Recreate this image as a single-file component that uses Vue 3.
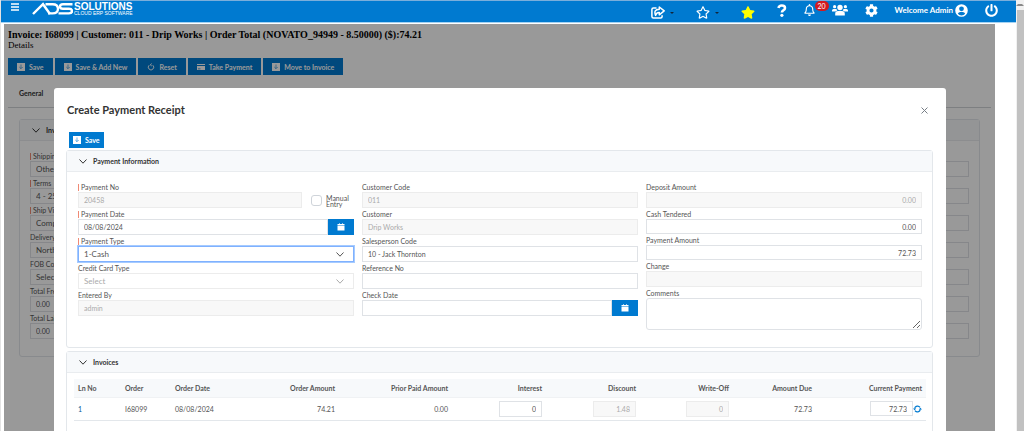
<script setup>
    import { ref } from 'vue';

    // toolbar of the invoice page
    const toolbar = [
        { text: 'Save', icon: 'save' },
        { text: 'Save & Add New', icon: 'save' },
        { text: 'Reset', icon: 'reset' },
        { text: 'Take Payment', icon: 'card' },
        { text: 'Move to Invoice', icon: 'save' },
    ]

    // invoice fields behind the dialog
    const invoiceFields = [
        { id: 'shipping', label: 'Shipping', value: 'Other', select: true, required: true },
        { id: 'terms', label: 'Terms', value: '4 - 25', select: true, required: true },
        { id: 'shipVia', label: 'Ship Via', value: 'Company', select: true, required: true },
        { id: 'delivery', label: 'Delivery', value: 'North', select: true },
        { id: 'fob', label: 'FOB Code', value: 'Select', select: true },
        { id: 'freight', label: 'Total Freight', value: '0.00' },
        { id: 'labor', label: 'Total Labor', value: '0.00' },
    ]

    const manualEntry = ref(false)
    const paymentDate = ref('08/08/2024')
    const paymentType = ref('1-Cash')
    const salesperson = ref('10 - Jack Thornton')
    const referenceNo = ref('')
    const checkDate = ref('')
    const cashTendered = ref('0.00')
    const paymentAmount = ref('72.73')
    const comments = ref('')

    // width is shared out over the table in proportion
    const columns = [
        { text: 'Ln No', width: 47 },
        { text: 'Order', width: 50 },
        { text: 'Order Date', width: 84 },
        { text: 'Order Amount', width: 84, num: true },
        { text: 'Prior Paid Amount', width: 113, num: true },
        { text: 'Interest', width: 94, num: true },
        { text: 'Discount', width: 94, num: true },
        { text: 'Write-Off', width: 93, num: true },
        { text: 'Amount Due', width: 83, num: true },
        { text: 'Current Payment', width: 110, num: true },
    ]

    const invoices = ref([
        { line: 1, order: 'I68099', date: '08/08/2024', amount: '74.21', prior: '0.00', interest: '0', discount: '1.48', writeOff: '0', due: '72.73', current: '72.73' },
    ])
</script>

<template>
    <div class="app">
        <div class="main">
            <!-- top bar -->
            <header class="topbar">
                <button class="iconBtn menu" aria-label="Menu">
                    <svg width="8" height="8" viewBox="0 0 8 8"><path d="M0 1h8M0 4h8M0 7h8" stroke="#fff" stroke-width="1.4" /></svg>
                </button>
                <a href="#" class="logo">
                    <svg width="41" height="13" viewBox="0 0 41 13" fill="none" stroke="#fff" stroke-width="2.4">
                        <path d="M1 12L11 2.200 18 12" />
                        <path d="M13.500 2.200h7q5.500 0 5.500 4.600t-5.500 4.600h-4.500" />
                        <path d="M40.500 2.200h-9.500q-3 0-3 2.300t3 2.300h6q3 0 3 2.300t-3 2.300h-10.500" />
                    </svg>
                    <span class="logoText">
                        <span class="logoName">SOLUTIONS</span>
                        <span class="logoSub">CLOUD ERP SOFTWARE</span>
                    </span>
                </a>

                <nav class="links">
                    <button class="iconBtn" aria-label="Share">
                        <svg width="14" height="13" viewBox="0 0 14 13" fill="none" stroke="#fff" stroke-width="1.500">
                            <path d="M5.500 1.900H2.400Q.9 1.900.9 3.400v7.200q0 1.500 1.500 1.500h7.200q1.500 0 1.500-1.500V9.300" />
                            <path d="M8.300 1l4.900 3.900-4.900 3.900V6.500Q5.500 6.400 4.600 9.400 2.200 3.600 8.300 3.300z" stroke-linejoin="round" />
                        </svg>
                        <span class="caret"></span>
                    </button>
                    <button class="iconBtn" aria-label="Favorites">
                        <svg width="14" height="13" viewBox="0 0 576 512"><path fill="#fff" d="M528.1 171.5L382 150.2 316.7 17.8c-11.7-23.6-45.6-23.9-57.4 0L194 150.2 47.9 171.5c-26.2 3.8-36.7 36.1-17.7 54.6l105.7 103-25 145.5c-4.5 26.3 23.2 46 46.4 33.7L288 439.6l130.7 68.7c23.2 12.2 50.9-7.4 46.4-33.7l-25-145.5 105.7-103c19-18.5 8.5-50.8-17.7-54.6zM388.600 312.300l23.700 138.400L288 385.400l-124.300 65.300 23.700-138.400-100.600-98 139-20.200 62.200-126 62.200 126 139 20.200-100.600 98z" /></svg>
                        <span class="caret"></span>
                    </button>
                    <button class="iconBtn" aria-label="Add to favorites">
                        <svg width="14" height="13" viewBox="0 0 576 512"><path fill="#ff0" d="M259.300 17.800L194 150.200 47.900 171.500c-26.200 3.800-36.700 36.100-17.700 54.600l105.700 103-25 145.500c-4.500 26.300 23.200 46 46.400 33.700L288 439.600l130.700 68.700c23.200 12.200 50.900-7.400 46.400-33.700l-25-145.500 105.700-103c19-18.500 8.500-50.800-17.700-54.600L382 150.200 316.700 17.800c-11.700-23.600-45.600-23.900-57.400 0z" /></svg>
                    </button>
                </nav>
                <nav class="links user">
                    <button class="iconBtn" aria-label="Help">
                        <svg width="10" height="13" viewBox="0 0 10 13"><path d="M1.500 4Q2 1.500 4.800 1.500q3.200 0 3.200 2.400 0 1.500-1.700 2.400-1.400.8-1.400 2.300" fill="none" stroke="#fff" stroke-width="2.600" /><circle cx="4.900" cy="11.300" r="1.600" fill="#fff" /></svg>
                    </button>
                    <button class="iconBtn bell" aria-label="Notifications">
                        <svg width="11" height="12" viewBox="0 0 448 512"><path fill="#fff" d="M439.390 362.290c-19.320-20.760-55.470-51.990-55.470-154.290 0-77.700-54.480-139.900-127.940-155.160V32c0-17.670-14.320-32-31.980-32s-31.980 14.330-31.980 32v20.840C118.560 68.100 64.080 130.300 64.080 208c0 102.300-36.150 133.530-55.470 154.290-6 6.450-8.660 14.160-8.610 21.710.11 16.400 12.980 32 32.100 32h383.800c19.120 0 32-15.600 32.100-32 .05-7.550-2.610-15.270-8.610-21.710zM67.530 368c21.220-27.970 44.420-74.330 44.530-159.420 0-.2-.06-.38-.06-.58 0-61.860 50.140-112 112-112s112 50.140 112 112c0 .2-.06.38-.06.58.11 85.100 23.310 131.460 44.530 159.420H67.530zM224 512c35.320 0 63.970-28.650 63.970-64H160.030c0 35.350 28.650 64 63.970 64z" /></svg>
                        <span class="badge">20</span>
                    </button>
                    <button class="iconBtn" aria-label="Users">
                        <svg width="16" height="12" viewBox="0 0 16 12" fill="#fff">
                            <circle cx="8" cy="3.500" r="2.700" /><circle cx="2.600" cy="2.700" r="1.600" /><circle cx="13.400" cy="2.700" r="1.600" />
                            <path d="M3.200 11.500V9.800Q3.200 7 6 7h4q2.800 0 2.800 2.800v1.700zM0 7.500V6.400Q0 4.900 1.500 4.900h2.200q.6 0 1 .4.200.8.700 1.200-1.400.3-2 1zM16 7.500V6.400q0-1.500-1.500-1.500h-2.200q-.6 0-1 .4-.2.8-.7 1.200 1.400.3 2 1z" />
                        </svg>
                    </button>
                    <button class="iconBtn" aria-label="Settings">
                        <svg width="13" height="13" viewBox="0 0 512 512"><path fill="#fff" d="M487.400 315.700l-42.600-24.600c4.300-23.200 4.300-47 0-70.200l42.600-24.600c4.900-2.800 7.100-8.600 5.500-14-11.100-35.600-30-67.800-54.700-94.600-3.800-4.100-10-5.100-14.800-2.300L380.800 110c-17.900-15.400-38.500-27.300-60.800-35.100V25.800c0-5.600-3.900-10.500-9.400-11.700-36.700-8.200-74.300-7.800-109.200 0-5.500 1.200-9.400 6.100-9.400 11.700V75c-22.200 7.900-42.800 19.800-60.800 35.100L88.700 85.500c-4.900-2.800-11-1.900-14.800 2.300-24.700 26.700-43.600 58.900-54.700 94.600-1.700 5.400.6 11.200 5.500 14L67.300 221c-4.300 23.200-4.300 47 0 70.200l-42.600 24.600c-4.900 2.800-7.100 8.600-5.500 14 11.100 35.600 30 67.800 54.700 94.600 3.800 4.100 10 5.100 14.800 2.300l42.600-24.600c17.900 15.400 38.500 27.300 60.800 35.100v49.200c0 5.600 3.900 10.500 9.400 11.700 36.700 8.200 74.300 7.800 109.200 0 5.500-1.200 9.400-6.100 9.400-11.700v-49.200c22.200-7.900 42.800-19.800 60.800-35.100l42.600 24.600c4.900 2.800 11 1.900 14.800-2.300 24.700-26.700 43.600-58.900 54.700-94.600 1.500-5.500-.7-11.300-5.600-14.100zM256 336c-44.100 0-80-35.900-80-80s35.900-80 80-80 80 35.900 80 80-35.900 80-80 80z" /></svg>
                    </button>
                    <button class="iconBtn welcome">
                        <span>Welcome Admin</span>
                        <svg width="13" height="13" viewBox="0 0 13 13"><path fill="#fff" fill-rule="evenodd" d="M6.500.2a6.300 6.300 0 1 0 0 12.600 6.300 6.300 0 0 0 0-12.600zM6.500 2.400a2.400 2.400 0 1 1 0 4.800 2.400 2.400 0 0 1 0-4.800zM2.800 9.700Q3.600 8 5.200 8h2.600q1.600 0 2.400 1.700Q8.800 11.400 6.500 11.400T2.800 9.700z" /></svg>
                    </button>
                    <button class="iconBtn" aria-label="Log out">
                        <svg width="13" height="13" viewBox="0 0 512 512"><path fill="#fff" d="M400 54.100c63 45 104 118.600 104 201.900 0 136.800-110.800 247.700-247.500 248C120 504.300 8.200 393 8 256.400 7.900 173.100 48.900 99.300 111.800 54.200c11.700-8.300 28-4.800 35 7.700L162.600 90c5.900 10.500 3.100 23.800-6.600 31-41.500 30.800-68 79.600-68 134.900-.1 92.300 74.500 168.100 168 168.100 91.600 0 168.600-74.200 168-169.100-.3-51.800-24.700-101.800-68.100-134-9.700-7.200-12.400-20.500-6.500-30.900l15.800-28.100c7-12.400 23.200-16.100 34.800-7.800zM296 264V24c0-13.300-10.700-24-24-24h-32c-13.300 0-24 10.700-24 24v240c0 13.300 10.700 24 24 24h32c13.300 0 24-10.700 24-24z" /></svg>
                    </button>
                </nav>
            </header>

            <!-- invoice page -->
            <div class="page">
                <h1 class="pageTitle">Invoice: I68099 | Customer: 011 - Drip Works | Order Total (NOVATO_94949 - 8.50000) ($):74.21</h1>
                <div class="pageSub">Details</div>
                <div class="toolbar">
                    <button v-for="item in toolbar" :key="item.text" class="btn">
                        <svg v-if="item.icon === 'save'" width="8" height="8" viewBox="0 0 8 8"><path fill="#fff" d="M0 0h8v8H0z" /><path d="M4 1.500v4M2.300 4L4 5.700 5.700 4" fill="none" stroke="#007ad0" stroke-width=".6" /></svg>
                        <svg v-else-if="item.icon === 'reset'" width="8" height="8" viewBox="0 0 8 8"><path d="M2.200 2.200A2.700 2.700 0 1 0 5.800 2.200M4.800.6L3.200 1.800l1.600 1.200" fill="none" stroke="#fff" stroke-width=".9" /></svg>
                        <svg v-else width="8" height="8" viewBox="0 0 8 8"><path fill="#fff" fill-rule="evenodd" d="M0 1h8v1H0zM0 3h8v4H0zM1 5.500v.7h2.500v-.7z" /></svg>
                        {{ item.text }}
                    </button>
                </div>
                <div class="tabs">
                    <a href="#" class="tab">General</a>
                    <a href="#" class="tab active">Details</a>
                </div>

                <section class="card">
                    <h2 class="cardHead">
                        <svg width="8" height="5" viewBox="0 0 8 5"><path d="M.5.5L4 4.200 7.500.5" fill="none" stroke="#333" /></svg>
                        Invoice
                    </h2>
                    <div class="pageForm">
                        <div v-for="field in invoiceFields" :key="field.id" class="field">
                            <label :for="field.id" :class="{ required: field.required }">{{ field.label }}</label>
                            <select v-if="field.select" :id="field.id" class="input big">
                                <option>{{ field.value }}</option>
                            </select>
                            <input v-else :id="field.id" class="input" :value="field.value">
                        </div>
                    </div>
                </section>

                <!-- dialog -->
                <div class="mask">
                    <div class="dialog" role="dialog" aria-labelledby="dialogTitle">
                        <div class="dialogHead">
                            <h2 id="dialogTitle">Create Payment Receipt</h2>
                            <button class="close" aria-label="Close">
                                <svg width="7" height="7" viewBox="0 0 7 7"><path d="M.5.5l6 6M6.500.5l-6 6" stroke="#777e86" stroke-width="1" /></svg>
                            </button>
                        </div>
                        <button class="btn dialogSave">
                            <svg width="8" height="8" viewBox="0 0 8 8"><path fill="#fff" d="M0 0h8v8H0z" /><path d="M4 1.500v4M2.300 4L4 5.700 5.700 4" fill="none" stroke="#007ad0" stroke-width=".6" /></svg>
                            Save
                        </button>

                        <section class="card payment">
                            <h3 class="cardHead">
                                <svg width="8" height="5" viewBox="0 0 8 5"><path d="M.5.5L4 4.200 7.500.5" fill="none" stroke="#333" /></svg>
                                Payment Information
                            </h3>
                            <div class="form">
                                <div class="col">
                                    <div class="split">
                                        <div class="field">
                                            <label for="paymentNo" class="required">Payment No</label>
                                            <input id="paymentNo" class="input" value="20458" disabled>
                                        </div>
                                        <div class="check">
                                            <input type="checkbox" id="manualEntry" v-model="manualEntry">
                                            <label for="manualEntry">Manual Entry</label>
                                        </div>
                                    </div>
                                    <div class="field">
                                        <label for="paymentDate" class="required">Payment Date</label>
                                        <div class="dateBox">
                                            <input id="paymentDate" class="input" v-model="paymentDate">
                                            <button class="dateBtn" aria-label="Pick payment date">
                                                <svg width="8" height="8" viewBox="0 0 8 8"><path fill="#fff" d="M.5 1H2V.3h.8V1h2.400V.3H6V1h1.500v1H.5zM.5 2.600h7v5h-7z" /></svg>
                                            </button>
                                        </div>
                                    </div>
                                    <div class="field">
                                        <label for="paymentType" class="required">Payment Type</label>
                                        <div class="selectBox">
                                            <select id="paymentType" class="input big focused" v-model="paymentType">
                                                <option>1-Cash</option>
                                            </select>
                                            <svg width="8" height="5" viewBox="0 0 8 5"><path d="M.5.5L4 4.200 7.500.5" fill="none" stroke="#555" /></svg>
                                        </div>
                                    </div>
                                    <div class="field">
                                        <label for="cardType">Credit Card Type</label>
                                        <div class="selectBox">
                                            <select id="cardType" class="input big empty" disabled>
                                                <option>Select</option>
                                            </select>
                                            <svg width="8" height="5" viewBox="0 0 8 5"><path d="M.5.5L4 4.200 7.500.5" fill="none" stroke="#aaa" /></svg>
                                        </div>
                                    </div>
                                    <div class="field">
                                        <label for="enteredBy">Entered By</label>
                                        <input id="enteredBy" class="input" value="admin" disabled>
                                    </div>
                                </div>

                                <div class="col">
                                    <div class="field">
                                        <label for="customerCode">Customer Code</label>
                                        <input id="customerCode" class="input" value="011" disabled>
                                    </div>
                                    <div class="field">
                                        <label for="customer">Customer</label>
                                        <input id="customer" class="input" value="Drip Works" disabled>
                                    </div>
                                    <div class="field">
                                        <label for="salesperson">Salesperson Code</label>
                                        <input id="salesperson" class="input" v-model="salesperson">
                                    </div>
                                    <div class="field">
                                        <label for="referenceNo">Reference No</label>
                                        <input id="referenceNo" class="input" v-model="referenceNo">
                                    </div>
                                    <div class="field">
                                        <label for="checkDate">Check Date</label>
                                        <div class="dateBox">
                                            <input id="checkDate" class="input" v-model="checkDate">
                                            <button class="dateBtn" aria-label="Pick check date">
                                                <svg width="8" height="8" viewBox="0 0 8 8"><path fill="#fff" d="M.5 1H2V.3h.8V1h2.400V.3H6V1h1.500v1H.5zM.5 2.600h7v5h-7z" /></svg>
                                            </button>
                                        </div>
                                    </div>
                                </div>

                                <div class="col">
                                    <div class="field">
                                        <label for="deposit">Deposit Amount</label>
                                        <input id="deposit" class="input num" value="0.00" disabled>
                                    </div>
                                    <div class="field">
                                        <label for="cash">Cash Tendered</label>
                                        <input id="cash" class="input num short" v-model="cashTendered">
                                    </div>
                                    <div class="field">
                                        <label for="payAmount">Payment Amount</label>
                                        <input id="payAmount" class="input num short" v-model="paymentAmount">
                                    </div>
                                    <div class="field">
                                        <label for="change">Change</label>
                                        <input id="change" class="input num" disabled>
                                    </div>
                                    <div class="field">
                                        <label for="comments">Comments</label>
                                        <textarea id="comments" class="input area" v-model="comments"></textarea>
                                    </div>
                                </div>
                            </div>
                        </section>

                        <section class="card">
                            <h3 class="cardHead">
                                <svg width="8" height="5" viewBox="0 0 8 5"><path d="M.5.5L4 4.200 7.500.5" fill="none" stroke="#333" /></svg>
                                Invoices
                            </h3>
                            <div class="tableWrap">
                                <table>
                                    <colgroup>
                                        <col v-for="col in columns" :key="col.text" :style="{ width: col.width + 'px' }">
                                    </colgroup>
                                    <thead>
                                        <tr>
                                            <th v-for="col in columns" :key="col.text" :class="{ num: col.num }">{{ col.text }}</th>
                                        </tr>
                                    </thead>
                                    <tbody>
                                        <tr v-for="row in invoices" :key="row.line">
                                            <td><a href="#">{{ row.line }}</a></td>
                                            <td>{{ row.order }}</td>
                                            <td>{{ row.date }}</td>
                                            <td class="num">{{ row.amount }}</td>
                                            <td class="num">{{ row.prior }}</td>
                                            <td class="num"><input class="input cell num" v-model="row.interest" aria-label="Interest"></td>
                                            <td class="num"><input class="input cell num" v-model="row.discount" aria-label="Discount" disabled></td>
                                            <td class="num"><input class="input cell num" v-model="row.writeOff" aria-label="Write-Off" disabled></td>
                                            <td class="num">{{ row.due }}</td>
                                            <td>
                                                <div class="current">
                                                    <input class="input cell num short" v-model="row.current" aria-label="Current Payment">
                                                    <button class="refresh" aria-label="Refresh">
                                                        <svg width="9" height="8" viewBox="0 0 9 8"><path d="M1.700 3.600A2.900 2.900 0 0 1 7 2.400M7.300 4.400A2.900 2.900 0 0 1 2 5.600" fill="none" stroke="#007ad0" stroke-width="1.200" /><path d="M0 3.400h3.200L1.600 5.300zM9 4.600H5.800L7.400 2.700z" fill="#007ad0" /></svg>
                                                    </button>
                                                </div>
                                            </td>
                                        </tr>
                                    </tbody>
                                </table>
                            </div>
                        </section>
                    </div>
                </div>
            </div>
        </div>

        <!-- scroll bar -->
        <div class="scroll">
            <span class="scrollUp"></span>
            <div class="scrollThumb"></div>
        </div>
    </div>
</template>

<style>
    body {
        background-color: #ffffff;
    }
</style>

<style scoped>
    .app {
        display: flex;
        height: 100vh;
        overflow: hidden;
        box-sizing: border-box;
        border-left: 1px solid #e3e3e3;
        font-family: Lato, "Noto Sans", sans-serif;
        font-size: 7px;
        line-height: 10px;
        color: #555555;
    }

    .app * {
        box-sizing: border-box;
    }

    button, input, select, textarea {
        font-family: inherit;
        font-size: inherit;
        line-height: inherit;
        color: inherit;
        margin: 0;
    }

    button {
        padding: 0;
        border: none;
        background: none;
        cursor: pointer;
    }

    svg {
        display: block;
        flex: none;
    }

    .main {
        flex: 1;
        min-width: 0;
        display: flex;
        flex-direction: column;
    }

    .topbar {
        display: flex;
        align-items: flex-start;
        height: 23px;
        padding: 0 18px 0 10px;
        background-color: #007ad0;
        border-top: 1px solid #7aaedb;
        border-bottom: 1px solid #a5d3f3;
    }

    .menu {
        height: 12px;
    }

    .logo {
        display: flex;
        gap: 1px;
        margin: 1px auto 0 13px;
        color: #ffffff;
        text-decoration: none;
        font-family: "Liberation Sans", Arial, sans-serif;
    }

    .logoText {
        display: flex;
        flex-direction: column;
        padding-top: 1px;
    }

    .logoName {
        font-size: 10px;
        line-height: 8px;
        font-weight: bold;
    }

    .logoSub {
        font-size: 5px;
        line-height: 4px;
    }

    .links {
        display: flex;
        align-items: center;
        gap: 22px;
        height: 22px;
        color: #ffffff;
    }

    .user {
        gap: 17px;
        height: 18px;
        margin-left: 22px;
    }

    .iconBtn {
        display: flex;
        align-items: center;
        position: relative;
        color: #ffffff;
    }

    .caret {
        margin: 2px 0 0 5px;
        border: 2px solid transparent;
        border-top-color: #12263a;
        border-bottom: none;
    }

    .badge {
        position: absolute;
        left: 11px;
        top: -3px;
        width: 14px;
        height: 10px;
        border-radius: 5px;
        background-color: #d31a1f;
        font-size: 7px;
        text-align: center;
    }

    .welcome {
        gap: 2px;
        font-size: 8px;
        font-weight: bold;
    }

    .page {
        flex: 1;
        position: relative;
        margin: 1px 21px 0 3px;
        padding: 5px 4px 0;
        min-height: 0;
    }

    .pageTitle {
        margin: 0;
        font-family: "Liberation Serif", "Times New Roman", serif;
        font-size: 10px;
        line-height: 11px;
        color: #000000;
    }

    .pageSub {
        font-family: "Liberation Serif", "Times New Roman", serif;
        font-size: 9px;
        line-height: 10px;
        color: #000000;
    }

    .toolbar {
        display: flex;
        gap: 2px;
        margin-top: 8px;
    }

    .btn {
        display: flex;
        align-items: center;
        gap: 4px;
        height: 17px;
        padding: 0 9px;
        background-color: #007ad0;
        color: #ffffff;
        font-size: 7px;
        font-weight: bold;
        white-space: nowrap;
    }

    .tabs {
        display: flex;
        margin-top: 7px;
        border-bottom: 1px solid #d0d4d8;
    }

    .tab {
        padding: 6px 11px 9px;
        font-weight: bold;
        color: #333333;
        text-decoration: none;
    }

    .tab.active {
        box-shadow: 0 1px #007ad0;
    }

    .card {
        margin-bottom: 3px;
        border: 1px solid #e3e7eb;
        border-radius: 3px;
        background-color: #ffffff;
    }

    .page > .card {
        margin: 11px 11px 0;
    }

    .cardHead {
        display: flex;
        align-items: center;
        gap: 6px;
        height: 21px;
        margin: 0;
        padding: 0 12px;
        background-color: #f7f9fb;
        border-bottom: 1px solid #e9ecef;
        font-size: 7px;
        font-weight: bold;
        color: #333333;
    }

    .pageForm {
        padding: 10px 10px 16px;
    }

    .field {
        display: flex;
        flex-direction: column;
        margin-bottom: 1px;
    }

    .field label {
        white-space: nowrap;
    }

    .required::before {
        content: "";
        display: inline-block;
        width: 1px;
        height: 7px;
        margin-right: 2px;
        vertical-align: -1px;
        background-color: #f08a75;
    }

    .input {
        width: 100%;
        height: 16px;
        padding: 0 5px;
        border: 1px solid #dfe2e6;
        border-radius: 0;
        background-color: #ffffff;
        appearance: none;
        outline: none;
    }

    .input:disabled {
        background-color: #f8f8f8;
        border-color: #ececec;
        color: #aaaaaa;
        opacity: 1;
    }

    .input.big {
        font-size: 8px;
    }

    .input.empty:disabled {
        background-color: #ffffff;
    }

    .input.num {
        text-align: right;
    }

    .input.short {
        height: 15px;
    }

    .input.focused {
        border-color: #7fb1ff;
        box-shadow: 0 0 0 1px #a6cbff;
    }

    .input.area {
        height: 32px;
        border-radius: 3px;
        resize: vertical;
    }

    /* covers the page under the top bar */
    .mask {
        position: absolute;
        inset: 0;
        padding: 64px 49px 0 50px;
        background-color: rgba(0, 0, 0, 0.4);
        overflow: hidden;
    }

    .dialog {
        min-height: 100%;
        padding: 13px 13px 0 12px;
        border-radius: 3px 3px 0 0;
        background-color: #ffffff;
    }

    .dialogHead {
        display: flex;
        align-items: center;
        justify-content: space-between;
        height: 18px;
        padding: 0 5px 0 1px;
    }

    .dialogHead h2 {
        margin: 0;
        font-size: 11px;
        font-weight: bold;
        color: #333333;
    }

    .dialogSave {
        margin: 13px 0 2px 3px;
        height: 16px;
        padding: 0 4px;
    }

    .form {
        display: grid;
        grid-template-columns: repeat(3, minmax(0, 1fr));
        gap: 8px;
        padding: 10px 10px 16px 11px;
    }

    .split {
        display: flex;
    }

    .split .field {
        flex: 1;
    }

    .check {
        display: flex;
        align-items: center;
        gap: 4px;
        width: 52px;
        padding: 10px 0 0 9px;
    }

    .check input {
        appearance: none;
        flex: none;
        width: 11px;
        height: 11px;
        border: 1px solid #cfd4da;
        border-radius: 3px;
        background-color: #ffffff;
    }

    .check label {
        line-height: 6px;
    }

    .dateBox {
        display: flex;
    }

    .dateBtn {
        display: flex;
        align-items: center;
        justify-content: center;
        flex: none;
        width: 26px;
        background-color: #007ad0;
    }

    .selectBox {
        position: relative;
    }

    .selectBox svg {
        position: absolute;
        right: 10px;
        top: 6px;
        pointer-events: none;
    }

    .tableWrap {
        padding: 6px 6px 16px 7px;
    }

    table {
        width: 100%;
        table-layout: fixed;
        border-collapse: collapse;
    }

    th, td {
        padding: 0 4px;
        text-align: left;
        white-space: nowrap;
    }

    th {
        height: 18px;
        background-color: #f7f9fb;
        border-bottom: 1px solid #f0f2f4;
        font-weight: bold;
        color: #555555;
    }

    td {
        height: 23px;
        border-bottom: 1px solid #e3e7eb;
    }

    td a {
        color: #0b5c99;
        text-decoration: none;
    }

    th.num, td.num {
        text-align: right;
    }

    .cell {
        width: 43px;
        vertical-align: middle;
    }

    .current {
        display: flex;
        align-items: center;
        justify-content: flex-end;
    }

    .scroll {
        width: 8px;
        background-color: #f1f1f1;
    }

    .scrollUp {
        display: block;
        height: 10px;
        padding-top: 2px;
    }

    .scrollUp::before {
        content: "";
        display: block;
        width: 4px;
        margin: 0 auto;
        border: 2px solid transparent;
        border-bottom-color: #8a8a8a;
    }

    .scrollThumb {
        height: 100%;
        margin-left: 1px;
        background-color: #c1c1c1;
    }
</style>
